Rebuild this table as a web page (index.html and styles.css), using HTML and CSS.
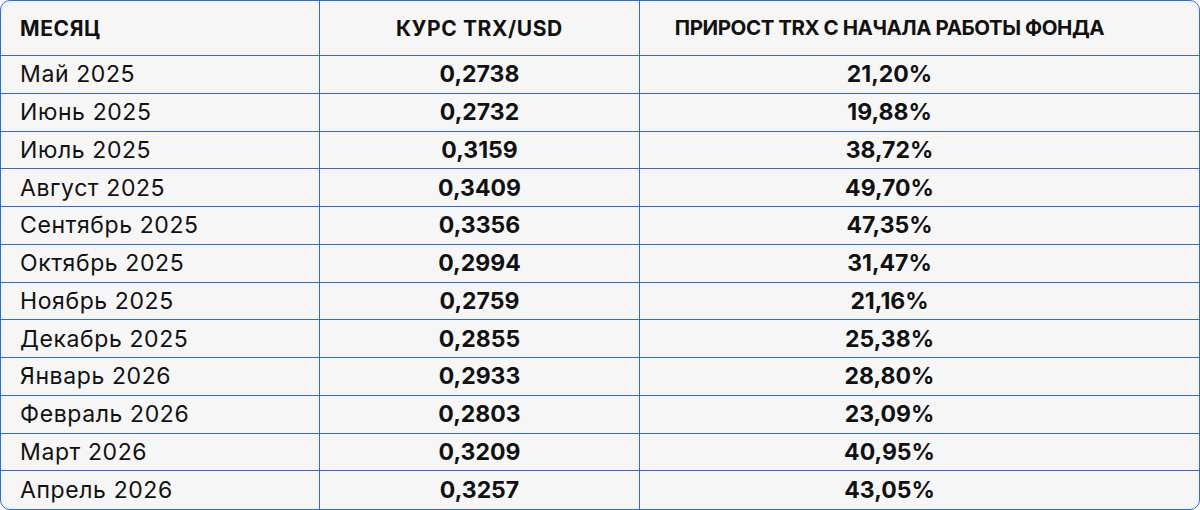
FILE: index.html
```html
<!DOCTYPE html>
<html lang="ru">
<head>
<meta charset="utf-8">
<title>TRX</title>
<link rel="stylesheet" href="styles.css">
</head>
<body>
<div class="table">
  <div class="cell head c1">МЕСЯЦ</div>
  <div class="cell head c2">КУРС TRX/USD</div>
  <div class="cell head c3">ПРИРОСТ TRX С НАЧАЛА РАБОТЫ ФОНДА</div>

  <div class="cell c1">Май 2025</div><div class="cell c2 num">0,2738</div><div class="cell c3 num">21,20%</div>
  <div class="cell c1">Июнь 2025</div><div class="cell c2 num">0,2732</div><div class="cell c3 num">19,88%</div>
  <div class="cell c1">Июль 2025</div><div class="cell c2 num">0,3159</div><div class="cell c3 num">38,72%</div>
  <div class="cell c1">Август 2025</div><div class="cell c2 num">0,3409</div><div class="cell c3 num">49,70%</div>
  <div class="cell c1">Сентябрь 2025</div><div class="cell c2 num">0,3356</div><div class="cell c3 num">47,35%</div>
  <div class="cell c1">Октябрь 2025</div><div class="cell c2 num">0,2994</div><div class="cell c3 num">31,47%</div>
  <div class="cell c1">Ноябрь 2025</div><div class="cell c2 num">0,2759</div><div class="cell c3 num">21,16%</div>
  <div class="cell c1">Декабрь 2025</div><div class="cell c2 num">0,2855</div><div class="cell c3 num">25,38%</div>
  <div class="cell c1">Январь 2026</div><div class="cell c2 num">0,2933</div><div class="cell c3 num">28,80%</div>
  <div class="cell c1">Февраль 2026</div><div class="cell c2 num">0,2803</div><div class="cell c3 num">23,09%</div>
  <div class="cell c1">Март 2026</div><div class="cell c2 num">0,3209</div><div class="cell c3 num">40,95%</div>
  <div class="cell c1">Апрель 2026</div><div class="cell c2 num">0,3257</div><div class="cell c3 num">43,05%</div>
</div>
</body>
</html>
```

FILE: styles.css
```css
* { box-sizing: border-box; }
html, body { margin: 0; padding: 0; background: #ffffff; }
body {
  font-family: Inter, "Noto Sans", sans-serif;
  color: #111111;
}
.table {
  width: 1200px;
  height: 510px;
  border: 1px solid #2f6ad9;
  border-radius: 10px;
  overflow: hidden;
  background: #f6f6f6;
  display: grid;
  grid-template-columns: 319px 320px 1fr;
  grid-template-rows: 55px repeat(12, 1fr);
}
.cell {
  display: flex;
  align-items: center;
  border-bottom: 1px solid #2f6ad9;
  font-size: 23px;
  line-height: 1;
  padding-top: 1px;
}
.c1 { padding-left: 19px; border-right: 1px solid #2f6ad9; letter-spacing: 0.6px; }
.c2 { justify-content: center; border-right: 1px solid #2f6ad9; }
.c3 { justify-content: center; padding-right: 60px; }
.num { font-weight: 700; }
.head { font-weight: 700; font-size: 21px; padding-top: 0; letter-spacing: 0.6px; }
.head.c3 { font-size: 20.5px; letter-spacing: -0.45px; }
.cell:nth-last-child(-n+3) { border-bottom: none; }
```
